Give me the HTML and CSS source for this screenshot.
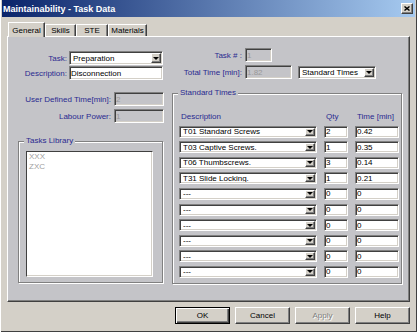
FILE: index.html
```html
<!DOCTYPE html>
<html lang="en">
<head>
    <meta charset="UTF-8">
    <title>Maintainability - Task Data</title>
    <link rel="stylesheet" href="styles.css">
</head>
<body>
    <div class="window">
        <div class="titlebar">
            <span class="title">Maintainability - Task Data</span>
            <span class="close">
                <svg width="6" height="5" viewBox="0 0 6 5"><path d="M0.5 0.5 L5.5 4.5 M5.5 0.5 L0.5 4.5" stroke="#000" stroke-width="1.4"/></svg>
            </span>
        </div>

        <div class="tabs">
            <div class="tab tab-general active">General</div>
            <div class="tab tab-skills">Skills</div>
            <div class="tab tab-ste">STE</div>
            <div class="tab tab-materials">Materials</div>
        </div>

        <div class="panel">
            <div class="top">
                <div class="form form-task">
                    <label class="lbl">Task:</label>
                    <div class="combo"><span class="combo-text">Preparation</span><span class="drop"></span></div>
                    <label class="lbl">Description:</label>
                    <input class="field" value="Disconnection">
                </div>

                <div class="form form-total">
                    <label class="lbl">Task # :</label>
                    <input class="field field-num" value="1" disabled>
                    <label class="lbl">Total Time [min]:</label>
                    <div class="total-row">
                        <input class="field field-total" value="1.82" disabled>
                        <div class="combo combo-mode"><span class="combo-text">Standard Times</span><span class="drop"></span></div>
                    </div>
                </div>
            </div>

            <div class="bottom">
                <div class="left-col">
                    <div class="form form-user">
                        <label class="lbl">User Defined Time[min]:</label>
                        <input class="field" value="2" disabled>
                        <label class="lbl">Labour Power:</label>
                        <input class="field" value="1" disabled>
                    </div>

                    <div class="group library">
                        <span class="group-title">Tasks Library</span>
                        <div class="list">
                            <div>XXX</div>
                            <div>ZXC</div>
                        </div>
                    </div>
                </div>

                <div class="group times">
                    <span class="group-title">Standard Times</span>
                    <div class="times-grid">
                        <div class="th">Description</div>
                        <div class="th">Qty</div>
                        <div class="th">Time [min]</div>

                        <div class="combo"><span class="combo-text">T01 Standard Screws</span><span class="drop"></span></div>
                        <input class="field" value="2">
                        <input class="field" value="0.42">

                        <div class="combo"><span class="combo-text">T03 Captive Screws.</span><span class="drop"></span></div>
                        <input class="field" value="1">
                        <input class="field" value="0.35">

                        <div class="combo"><span class="combo-text">T06 Thumbscrews.</span><span class="drop"></span></div>
                        <input class="field" value="3">
                        <input class="field" value="0.14">

                        <div class="combo"><span class="combo-text">T31 Slide Locking.</span><span class="drop"></span></div>
                        <input class="field" value="1">
                        <input class="field" value="0.21">

                        <div class="combo"><span class="combo-text">---</span><span class="drop"></span></div>
                        <input class="field" value="0">
                        <input class="field" value="0">

                        <div class="combo"><span class="combo-text">---</span><span class="drop"></span></div>
                        <input class="field" value="0">
                        <input class="field" value="0">

                        <div class="combo"><span class="combo-text">---</span><span class="drop"></span></div>
                        <input class="field" value="0">
                        <input class="field" value="0">

                        <div class="combo"><span class="combo-text">---</span><span class="drop"></span></div>
                        <input class="field" value="0">
                        <input class="field" value="0">

                        <div class="combo"><span class="combo-text">---</span><span class="drop"></span></div>
                        <input class="field" value="0">
                        <input class="field" value="0">

                        <div class="combo"><span class="combo-text">---</span><span class="drop"></span></div>
                        <input class="field" value="0">
                        <input class="field" value="0">
                    </div>
                </div>
            </div>
        </div>

        <div class="buttons">
            <button class="btn btn-default">OK</button>
            <button class="btn">Cancel</button>
            <button class="btn" disabled>Apply</button>
            <button class="btn">Help</button>
        </div>
    </div>
</body>
</html>
```

FILE: styles.css
```css
body {
    margin: 0;
    font-family: "Liberation Sans", Arial, sans-serif;
    font-size: 8px;
}
.window {
    width: 417px;
    height: 332px;
    box-sizing: border-box;
    padding: 0 2px;
    background-color: #d4d0c8;
    box-shadow: inset 1px 0 #fff, inset -1px -1px #404040;
    overflow: hidden;
}
.titlebar {
    height: 17px;
    display: flex;
    align-items: center;
    justify-content: space-between;
    padding: 0 2px 0 1px;
    background: linear-gradient(to right, #0a246a, #a6caf0);
}
.title {
    color: #fff;
    font-weight: bold;
    font-size: 9px;
}
.close {
    width: 12px;
    height: 11px;
    box-sizing: border-box;
    display: flex;
    align-items: center;
    justify-content: center;
    background-color: #d4d0c8;
    border: 1px solid;
    border-color: #fff #404040 #404040 #fff;
    box-shadow: inset -1px -1px #808080;
}
.close svg {
    display: block;
}

/* tabs */
.tabs {
    display: flex;
    align-items: flex-end;
    height: 14px;
    margin-top: 5px;
    padding-left: 6px;
}
.tab {
    height: 12px;
    box-sizing: border-box;
    display: flex;
    align-items: center;
    justify-content: center;
    border: 1px solid;
    border-bottom: none;
    border-color: #fff #404040 transparent #fff;
    box-shadow: inset -1px 0 #808080;
    background-color: #d4d0c8;
}
.tab.active {
    height: 15px;
    margin-bottom: -1px;
    position: relative;
    z-index: 1;
}
.tab-general { width: 37px; }
.tab-skills { width: 31px; }
.tab-ste { width: 32px; }
.tab-materials { width: 39px; }

.panel {
    margin-left: 5px;
    width: 403px;
    height: 266px;
    box-sizing: border-box;
    background-color: #c4c4c8;
    border: 1px solid;
    border-color: #fff #404040 #404040 #fff;
    box-shadow: inset -1px -1px #808080;
}

/* inputs */
.field {
    box-sizing: border-box;
    height: 14px;
    width: 100%;
    margin: 0;
    padding: 0 1px;
    font: inherit;
    color: #000;
    background-color: #fff;
    border: 1px solid;
    border-color: #808080 #fff #fff #808080;
    box-shadow: inset 1px 1px #404040, inset -1px -1px #d4d0c8;
    outline: none;
}
.field:disabled {
    background-color: #c4c4c8;
    color: #999;
    -webkit-text-fill-color: #999;
    opacity: 1;
}
.combo {
    box-sizing: border-box;
    height: 14px;
    display: flex;
    align-items: stretch;
    padding: 1px 1px 1px 3px;
    background-color: #fff;
    border: 1px solid;
    border-color: #808080 #fff #fff #808080;
    box-shadow: inset 1px 1px #404040, inset -1px -1px #d4d0c8;
}
.combo-text {
    flex: 1;
    display: flex;
    align-items: center;
    white-space: nowrap;
    overflow: hidden;
}
.drop {
    width: 10px;
    box-sizing: border-box;
    display: flex;
    align-items: center;
    justify-content: center;
    background-color: #d4d0c8;
    border: 1px solid;
    border-color: #fff #404040 #404040 #fff;
    box-shadow: inset -1px -1px #808080;
}
.drop::after {
    content: "";
    border-left: 3px solid transparent;
    border-right: 3px solid transparent;
    border-top: 3px solid #000;
}

/* form grids */
.form {
    display: grid;
    grid-auto-rows: 14px;
}
.lbl {
    color: #2a2a90;
    text-align: right;
    align-self: center;
    white-space: nowrap;
}
.top {
    display: flex;
    align-items: flex-start;
}
.form-task {
    margin: 14px 0 0 9px;
    grid-template-columns: 50px 94px;
    column-gap: 2px;
    row-gap: 1px;
}
.form-total {
    margin: 11px 0 0 17px;
    grid-template-columns: 62px 131px;
    column-gap: 3px;
    row-gap: 3px;
}
.total-row {
    display: flex;
    align-items: flex-start;
    gap: 6px;
}
.form-total .field-num { width: 27px; }
.form-total .field-total { width: 47px; flex: none; }
.form-total .combo-mode {
    width: 78px;
    height: 13px;
    margin-top: 1px;
    flex: none;
}

/* lower part */
.bottom {
    display: flex;
    align-items: flex-start;
}
.left-col {
    width: 147px;
    margin-left: 9px;
    padding-top: 12px;
}
.form-user {
    grid-template-columns: 94px 50px;
    column-gap: 3px;
    row-gap: 3px;
}
.group {
    position: relative;
    box-sizing: border-box;
    border: 1px solid #808080;
    box-shadow: inset 1px 1px #fff, 1px 1px #fff;
}
.group-title {
    position: absolute;
    top: -6px;
    left: 5px;
    padding: 0 2px;
    line-height: 10px;
    color: #2a2a90;
    background-color: #c4c4c8;
}
.library {
    width: 145px;
    height: 142px;
    margin: 18px 0 0 1px;
    padding: 9px 0 0 7px;
}
.list {
    width: 127px;
    height: 126px;
    box-sizing: border-box;
    padding: 0 2px;
    line-height: 10px;
    color: #a0a0a0;
    background-color: #fff;
    border: 1px solid;
    border-color: #404040 #fff #fff #404040;
    box-shadow: inset -1px -1px #d4d0c8;
}
.times {
    width: 230px;
    height: 191px;
    margin: 13px 0 0 8px;
    padding: 16px 0 0 6px;
}
.times-grid {
    display: grid;
    grid-template-columns: 138px 24px 44px;
    grid-auto-rows: 12px;
    column-gap: 7px;
    row-gap: 3.6px;
}
.times-grid .combo,
.times-grid .field {
    height: 12px;
}
.th {
    color: #2a2a90;
    align-self: center;
    padding-left: 2px;
}

/* dialog buttons */
.buttons {
    display: flex;
    justify-content: flex-end;
    gap: 5px;
    margin-top: 5px;
    padding-right: 5px;
}
.btn {
    width: 55px;
    height: 17px;
    box-sizing: border-box;
    padding: 0;
    font: inherit;
    color: #000;
    background-color: #d4d0c8;
    border: 1px solid;
    border-color: #fff #404040 #404040 #fff;
    box-shadow: inset -1px -1px #808080;
}
.btn-default {
    border-color: #000;
    box-shadow: inset 1px 1px #fff, inset -1px -1px #404040, inset -2px -2px #808080;
}
.btn:disabled {
    color: #808080;
    text-shadow: 1px 1px #fff;
}
```
